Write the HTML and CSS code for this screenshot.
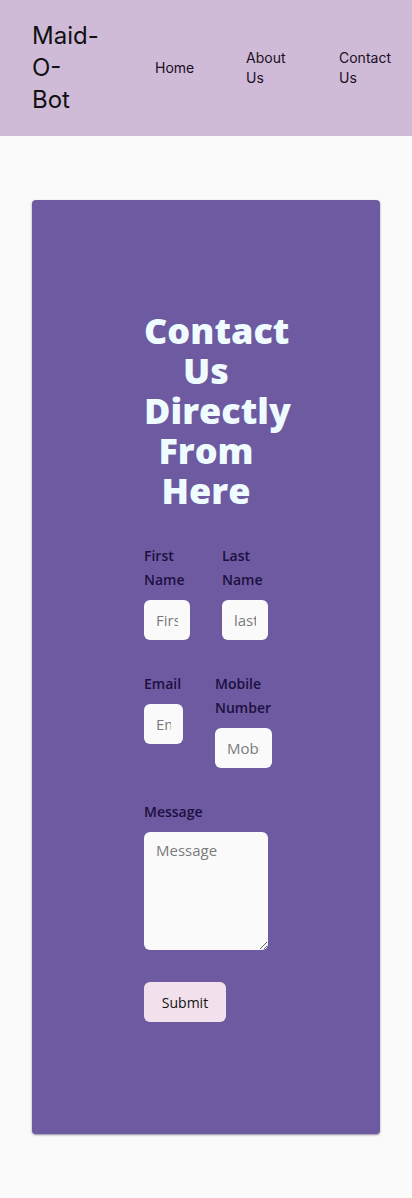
FILE: index.html
```html
<!DOCTYPE html>
<html lang="en">
<head>
<meta charset="utf-8">
<meta name="viewport" content="width=device-width, initial-scale=1">
<title>Maid-O-Bot | Contact</title>
<link rel="stylesheet" href="styles.css">
</head>
<body>
<header class="site-header">
  <div class="logo">Maid-O-Bot</div>
  <nav class="nav">
    <a class="nav-link nav-home" href="#">Home</a>
    <a class="nav-link nav-about" href="#">About Us</a>
    <a class="nav-link nav-contact" href="#">Contact Us</a>
  </nav>
</header>
<main class="page">
  <section class="card">
    <div class="card-inner">
      <h1 class="title">Contact Us Directly From Here</h1>
      <form class="form">
        <div class="row">
          <div class="field w46">
            <label class="label" for="fn">First Name</label>
            <input class="input" id="fn" type="text" placeholder="First Name">
          </div>
          <div class="field w46">
            <label class="label" for="ln">Last Name</label>
            <input class="input" id="ln" type="text" placeholder="last Name">
          </div>
        </div>
        <div class="row">
          <div class="field w39">
            <label class="label" for="em">Email</label>
            <input class="input" id="em" type="email" placeholder="Email">
          </div>
          <div class="field w57">
            <label class="label" for="mb">Mobile Number</label>
            <input class="input" id="mb" type="text" placeholder="Mobile Number">
          </div>
        </div>
        <div class="field full">
          <label class="label" for="msg">Message</label>
          <textarea class="textarea" id="msg" placeholder="Message"></textarea>
        </div>
        <div class="actions">
          <button class="btn" type="button">Submit</button>
        </div>
      </form>
    </div>
  </section>
</main>
</body>
</html>
```

FILE: styles.css
```css
* { box-sizing: border-box; }
html, body { margin: 0; padding: 0; }
body {
  background: #fafafa;
  font-family: "Open Sans", "Noto Sans", sans-serif;
}
.site-header {
  height: 136px;
  background: #cfbad8;
  display: flex;
  align-items: center;
  padding: 0 20px 0 32px;
}
.logo {
  font-family: Inter, "Liberation Sans", sans-serif;
  font-size: 24px;
  line-height: 32px;
  color: #111;
  width: 66px;
  flex: none;
}
.nav {
  display: flex;
  align-items: center;
  margin-left: 57px;
  gap: 49px;
}
.nav-link {
  font-family: Inter, "Liberation Sans", sans-serif;
  font-size: 14px;
  line-height: 20px;
  color: #1a1022;
  text-decoration: none;
}
.nav-home { width: 42px; }
.nav-about { width: 44px; }
.nav-contact { width: 56px; }

.page { padding: 64px 32px; }
.card {
  background: #6e5aa0;
  border-radius: 4px;
  box-shadow: 0 1px 2px rgba(40, 20, 70, 0.5);
  padding: 111px 112px 112px;
  height: 934px;
}
.card-inner { width: 124px; }
.title {
  margin: 0 0 33px;
  font-family: "Open Sans", "Noto Sans", sans-serif;
  font-weight: 800;
  font-size: 36px;
  line-height: 40px;
  color: #eefcff;
  text-align: center;
}
.form { display: flex; flex-direction: column; gap: 32px; }
.row { display: flex; gap: 32px; align-items: flex-start; }
.field { display: flex; flex-direction: column; gap: 8px; flex: none; }
.w46 { width: 46px; }
.w39 { width: 39px; }
.w57 { width: 57px; }
.full { width: 124px; }
.label {
  font-family: "Open Sans", "Noto Sans", sans-serif;
  font-weight: 600;
  font-size: 14px;
  line-height: 24px;
  color: #1c1040;
}
.input {
  display: block;
  width: 100%;
  height: 40px;
  border: none;
  border-radius: 6px;
  background: #fafafa;
  padding: 0 12px;
  font-family: "Open Sans", "Noto Sans", sans-serif;
  font-size: 15px;
  color: #222;
  text-align: center;
}
.input::placeholder, .textarea::placeholder { color: #7a7a7a; }
.textarea {
  display: block;
  width: 124px;
  height: 118px;
  border: none;
  border-radius: 6px;
  background: #fafafa;
  padding: 8px 12px;
  font-family: "Open Sans", "Noto Sans", sans-serif;
  font-size: 15px;
}
.actions { display: flex; }
.btn {
  width: 82px;
  height: 40px;
  border: none;
  border-radius: 6px;
  background: #f2e1ec;
  font-family: "Open Sans", "Noto Sans", sans-serif;
  font-weight: 500;
  font-size: 14px;
  color: #111;
}
```
